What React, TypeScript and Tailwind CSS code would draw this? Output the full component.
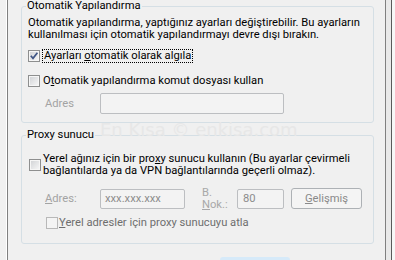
import React from "react";

const FONT = { fontFamily: '"Liberation Sans Narrow", "Roboto", sans-serif' };

function Box({ checked = false, disabled = false }: { checked?: boolean; disabled?: boolean }) {
  return (
    <div
      className={
        "w-[12px] h-[12px] shrink-0 border " +
        (disabled
          ? "border-[#b8b8b8] bg-[#f4f4f4]"
          : "border-[#8e8f8f] bg-gradient-to-br from-[#cfd1d4] to-[#f9f9f9] shadow-[inset_0_0_0_1px_#f6f6f6]")
      }
    >
      {checked && (
        <svg width="10" height="10" viewBox="0 0 10 10" className="block">
          <path d="M1.8 4.8 L4 7.4 L8.4 1.8" fill="none" stroke="#3f5585" strokeWidth="1.7" />
        </svg>
      )}
    </div>
  );
}

export default function App() {
  return (
    <div
      className="relative w-[395px] h-[260px] overflow-hidden bg-[#f0f0f0] flex text-[11.2px] leading-[12px] text-black"
      style={FONT}
    >
      {/* left frame */}
      <div className="w-[6px] shrink-0" />
      <div className="w-px shrink-0 bg-white" />
      <div className="w-px shrink-0 bg-[#7f7f7f]" />

      {/* content */}
      <div className="w-[377px] shrink-0 flex flex-col pl-[13px]">
        <fieldset className="w-[353px] border border-[#d5dfe5] rounded-[3px]">
          <legend className="ml-[4px] px-[1px] leading-[12px]">Otomatik Yapılandırma</legend>
          <div className="pl-[6px] pt-[5px] pb-[8px] flex flex-col">
            <p className="whitespace-nowrap">
              Otomatik yapılandırma, yaptığınız ayarları değiştirebilir. Bu ayarların
              <br />
              kullanılması için otomatik yapılandırmayı devre dışı bırakın.
            </p>
            <div className="mt-[9px] flex items-center h-[12px]">
              <Box checked />
              <span className="ml-[2px] border border-dotted border-black px-[1px] whitespace-nowrap">
                Ayarları <span className="underline">o</span>tomatik olarak algıla
              </span>
            </div>
            <div className="mt-[13px] flex items-center h-[12px]">
              <Box />
              <span className="ml-[3px] whitespace-nowrap">
                O<span className="underline">t</span>omatik yapılandırma komut dosyası kullan
              </span>
            </div>
            <div className="mt-[6px] flex items-center h-[21px] pl-[17px]">
              <span className="w-[55px] text-[#a3a3a3]">Adres</span>
              <div className="w-[184px] h-[21px] border border-[#bcbec1] rounded-[2px] bg-[#f3f3f3]" />
            </div>
          </div>
        </fieldset>

        <fieldset className="mt-[6px] w-[353px] border border-[#d5dfe5] rounded-[3px]">
          <legend className="ml-[4px] px-[1px] leading-[12px]">Proxy sunucu</legend>
          <div className="pl-[6px] pt-[12px] pb-[14px] flex flex-col">
            <div className="flex items-center pl-[1px]">
              <Box />
              <span className="ml-[2px] whitespace-nowrap">
                Yerel ağınız için bir pro<span className="underline">x</span>y sunucu kullanın (Bu ayarlar çevirmeli
                <br />
                bağlantılarda ya da VPN bağlantılarında geçerli olmaz).
              </span>
            </div>
            <div className="mt-[11px] flex items-center h-[21px] pl-[17px]">
              <span className="w-[55px] text-[#a3a3a3]">
                <span className="underline">A</span>dres:
              </span>
              <div className="w-[85px] h-[20px] border border-[#bcbec1] rounded-[2px] bg-[#f3f3f3] flex items-center pl-[4px] text-[#8c8c8c]">
                xxx.xxx.xxx
              </div>
              <div className="ml-[17px] w-[35px] text-[#a8a8a8] leading-[12px]">
                B.
                <br />
                <span className="underline">N</span>ok.:
              </div>
              <div className="w-[47px] h-[20px] border border-[#bcbec1] rounded-[2px] bg-[#f3f3f3] flex items-center pl-[5px] text-[#8c8c8c]">
                80
              </div>
              <div className="ml-[7px] w-[71px] h-[21px] border border-[#adb1b5] rounded-[3px] bg-[#f4f4f4] flex items-center justify-center text-[#8a8a8a]">
                <span>
                  <span className="underline">G</span>elişmiş
                </span>
              </div>
            </div>
            <div className="mt-[8px] flex items-center h-[12px] pl-[18px]">
              <Box disabled />
              <span className="ml-[1px] whitespace-nowrap text-[#6e6e6e]">
                <span className="underline">Y</span>erel adresler için proxy sunucuyu atla
              </span>
            </div>
          </div>
        </fieldset>

        <div className="mt-[13px] ml-[199px] w-[70px] h-[22px] shrink-0 rounded-[3px] bg-[#d6eaf9]" />
      </div>

      {/* right frame */}
      <div className="w-px shrink-0 bg-[#808080]" />
      <div className="w-[5px] shrink-0 bg-[#e9e9e9]" />
      <div className="w-px shrink-0 bg-[#5a5a5a]" />
      <div className="flex-1 bg-[#f7f7f7]" />

      {/* watermark */}
      <div
        className="absolute left-[100px] top-[121px] text-[18px] leading-[18px] text-[#e7e7e7] whitespace-nowrap pointer-events-none"
        style={{ fontFamily: '"DejaVu Sans", sans-serif' }}
      >
        En Kısa © enkisa.com
      </div>
    </div>
  );
}
